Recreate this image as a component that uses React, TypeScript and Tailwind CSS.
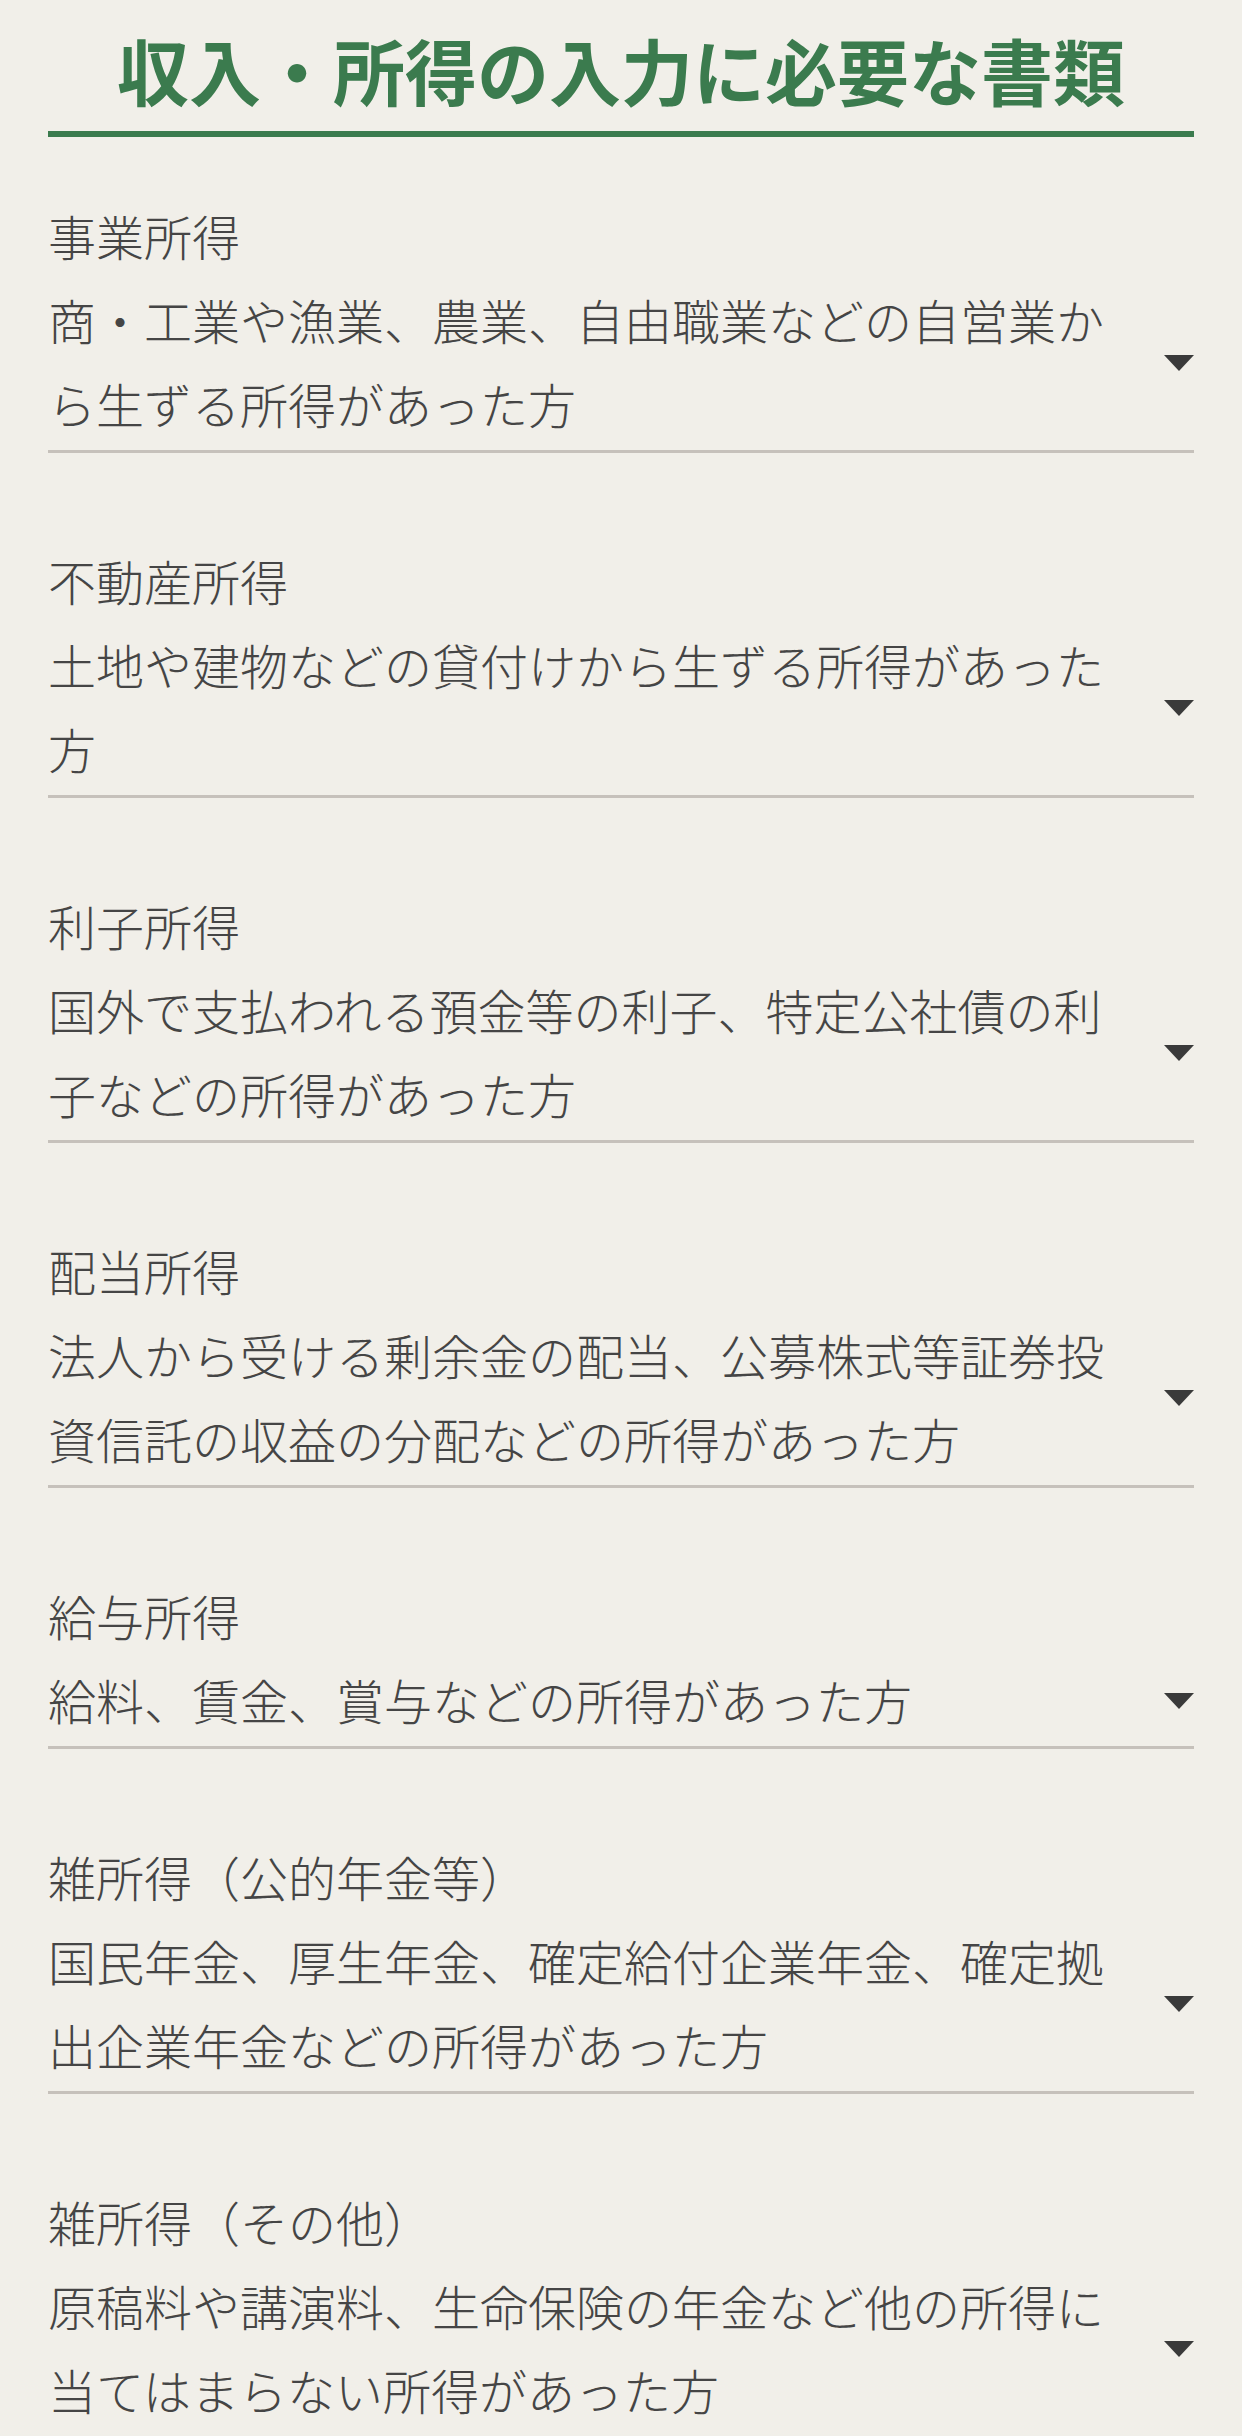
const items = [
  {
    title: '事業所得',
    body: '商・工業や漁業、農業、自由職業などの自営業から生ずる所得があった方',
  },
  {
    title: '不動産所得',
    body: '土地や建物などの貸付けから生ずる所得があった方',
  },
  {
    title: '利子所得',
    body: '国外で支払われる預金等の利子、特定公社債の利子などの所得があった方',
  },
  {
    title: '配当所得',
    body: '法人から受ける剰余金の配当、公募株式等証券投資信託の収益の分配などの所得があった方',
  },
  {
    title: '給与所得',
    body: '給料、賃金、賞与などの所得があった方',
  },
  {
    title: '雑所得（公的年金等）',
    body: '国民年金、厚生年金、確定給付企業年金、確定拠出企業年金などの所得があった方',
  },
  {
    title: '雑所得（その他）',
    body: '原稿料や講演料、生命保険の年金など他の所得に当てはまらない所得があった方',
  },
];

function Caret() {
  return (
    <svg width="30" height="16" viewBox="0 0 30 16" className="block">
      <path d="M0 0 H30 L15 16 Z" fill="#3a3a3a" />
    </svg>
  );
}

export default function App() {
  return (
    <div
      className="min-h-screen w-full bg-[#f1efe9] px-[48px] text-[#454545]"
      style={{ fontFamily: '"Noto Sans CJK JP", "Noto Sans", sans-serif' }}
    >
      {/* Heading */}
      <h1 className="border-b-[6px] border-[#3b7b4e] pt-[19px] pb-[12px] text-center text-[72px] font-bold leading-[100px] text-[#3b7b4e]">
        収入・所得の入力に必要な書類
      </h1>

      {/* Income type list */}
      <ul className="mt-[56px] flex flex-col gap-[85px]">
        {items.map((item) => (
          <li key={item.title} className="border-b-[3px] border-[#c6c1bb] pb-[5px]">
            <p className="text-[48px] font-light leading-[84px]">{item.title}</p>
            <div className="flex items-center gap-[40px]">
              <p className="flex-1 text-[48px] font-light leading-[84px]">{item.body}</p>
              <div className="mt-[4px] shrink-0">
                <Caret />
              </div>
            </div>
          </li>
        ))}
      </ul>
    </div>
  );
}
